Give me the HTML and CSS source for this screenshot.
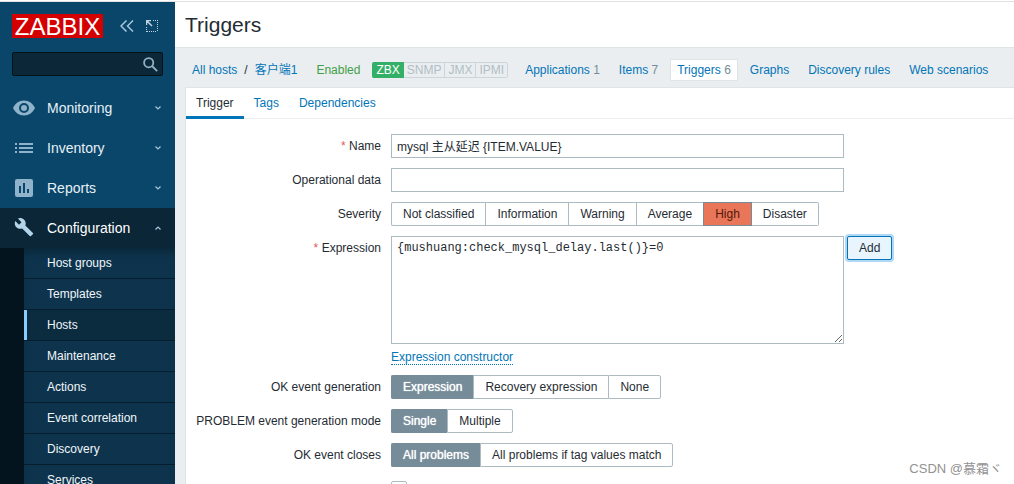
FILE: index.html
```html
<!DOCTYPE html>
<html lang="en">
<head>
<meta charset="utf-8">
<title>Triggers</title>
<link rel="stylesheet" href="styles.css">
</head>
<body>
<aside class="sidebar">
  <div class="brand">
    <a class="logo" href="#">ZABBIX</a>
    <button class="icon-button" type="button" aria-label="Collapse sidebar">
      <svg width="14" height="12" viewBox="0 0 14 12" fill="none" stroke="#a9c6da" stroke-width="1.5"><path d="M6.500 .5 1 6l5.500 5.500M13 .5 7.500 6l5.500 5.500"/></svg>
    </button>
    <button class="icon-button" type="button" aria-label="Hide sidebar">
      <svg width="12" height="12" viewBox="0 0 12 12" fill="none" stroke="#c0d5e3"><path d="M7 .5h5M11.500 2v10M.5 7v5M1 11.500h10" stroke-dasharray="1 1"/><path d="M0 .5h5M.5 0v5M1 1l5 5" stroke-width="1.500"/></svg>
    </button>
  </div>
  <form class="search">
    <input class="search-input" type="text" aria-label="Search">
    <button class="search-button" type="button" aria-label="Search">
      <svg width="15" height="15" viewBox="0 0 15 15" fill="none" stroke="#8fb0c5" stroke-width="1.800"><circle cx="5.700" cy="5.700" r="4.600"/><path d="m9 9 5.200 5.200"/></svg>
    </button>
  </form>
  <nav class="menu">
    <a class="menu-item" href="#">
      <svg class="menu-icon" width="22" height="16" viewBox="0 0 22 16"><path fill="#8fb3cb" fill-rule="evenodd" d="M11 .5C6 .5 2 3.500 0 8c2 4.500 6 7.500 11 7.500S20 12.500 22 8C20 3.500 16 .5 11 .5Zm0 2.500a5 5 0 1 1 0 10 5 5 0 0 1 0-10Zm0 2a3 3 0 1 0 0 6 3 3 0 0 0 0-6Z"/></svg>
      <span class="menu-text">Monitoring</span>
      <svg class="chevron" width="6" height="4" viewBox="0 0 6 4"><path d="m.5.5 2.500 2.500L5.500.5"/></svg>
    </a>
    <a class="menu-item" href="#">
      <svg class="menu-icon" width="18" height="12" viewBox="0 0 18 12" fill="#8fb3cb"><path d="M0 1h2v2H0zM4 1h14v2H4zM0 5h2v2H0zM4 5h14v2H4zM0 9h2v2H0zM4 9h14v2H4z"/></svg>
      <span class="menu-text">Inventory</span>
      <svg class="chevron" width="6" height="4" viewBox="0 0 6 4"><path d="m.5.5 2.500 2.500L5.500.5"/></svg>
    </a>
    <a class="menu-item" href="#">
      <svg class="menu-icon" width="18" height="18" viewBox="0 0 18 18"><path fill="#8fb3cb" fill-rule="evenodd" d="M2 0h14a2 2 0 0 1 2 2v14a2 2 0 0 1-2 2H2a2 2 0 0 1-2-2V2a2 2 0 0 1 2-2ZM4 7v7h2V7ZM8 4v10h2V4ZM12 10v4h2v-4Z"/></svg>
      <span class="menu-text">Reports</span>
      <svg class="chevron" width="6" height="4" viewBox="0 0 6 4"><path d="m.5.5 2.500 2.500L5.500.5"/></svg>
    </a>
    <a class="menu-item menu-item-open" href="#">
      <svg class="menu-icon" width="20" height="20" viewBox="0 1 24 24"><path fill="#b4d4e9" d="m22.700 19-9.100-9.100c.9-2.300.4-5-1.500-6.900-2-2-5-2.400-7.400-1.300L9 6 6 9 1.600 4.700C.4 7.100.9 10.100 2.900 12.100c1.900 1.900 4.600 2.400 6.900 1.500l9.100 9.100c.4.400 1 .4 1.400 0l2.300-2.300c.5-.4.500-1.100.1-1.400z"/></svg>
      <span class="menu-text">Configuration</span>
      <svg class="chevron" width="6" height="4" viewBox="0 0 6 4"><path d="m.5 3.500 2.500-2.500 2.500 2.500"/></svg>
    </a>
    <div class="submenu">
      <a class="submenu-item" href="#">Host groups</a>
      <a class="submenu-item" href="#">Templates</a>
      <a class="submenu-item submenu-item-current" href="#">Hosts</a>
      <a class="submenu-item" href="#">Maintenance</a>
      <a class="submenu-item" href="#">Actions</a>
      <a class="submenu-item" href="#">Event correlation</a>
      <a class="submenu-item" href="#">Discovery</a>
      <a class="submenu-item" href="#">Services</a>
    </div>
  </nav>
</aside>
<main class="main">
  <header class="title-bar"><h1 class="title">Triggers</h1></header>
  <nav class="host-nav">
    <div class="crumbs"><a href="#">All hosts</a><span>/</span><a href="#">客户端1</a></div>
    <span class="enabled">Enabled</span>
    <div class="badges"><span class="badge badge-on">ZBX</span><span class="badge">SNMP</span><span class="badge">JMX</span><span class="badge">IPMI</span></div>
    <div class="host-links">
      <span class="host-link"><a href="#">Applications</a> 1</span>
      <span class="host-link"><a href="#">Items</a> 7</span>
      <span class="host-link host-link-current"><a href="#">Triggers</a> 6</span>
      <span class="host-link"><a href="#">Graphs</a></span>
      <span class="host-link"><a href="#">Discovery rules</a></span>
      <span class="host-link"><a href="#">Web scenarios</a></span>
    </div>
  </nav>
  <section class="panel">
    <nav class="tabs">
      <a class="tab tab-current" href="#">Trigger</a>
      <a class="tab" href="#">Tags</a>
      <a class="tab" href="#">Dependencies</a>
    </nav>
    <form class="form">
      <label class="label required" for="name">Name</label>
      <input class="text-field" id="name" type="text" value="mysql 主从延迟 {ITEM.VALUE}">

      <label class="label" for="opdata">Operational data</label>
      <input class="text-field" id="opdata" type="text">

      <span class="label" id="severity-label">Severity</span>
      <div class="segments" role="radiogroup" aria-labelledby="severity-label">
        <label class="segment"><input type="radio" name="severity">Not classified</label>
        <label class="segment"><input type="radio" name="severity">Information</label>
        <label class="segment"><input type="radio" name="severity">Warning</label>
        <label class="segment"><input type="radio" name="severity">Average</label>
        <label class="segment segment-high"><input type="radio" name="severity" checked>High</label>
        <label class="segment"><input type="radio" name="severity">Disaster</label>
      </div>

      <label class="label required" for="expression">Expression</label>
      <div class="expression">
        <div class="expression-row">
          <textarea class="expression-field" id="expression" spellcheck="false">{mushuang:check_mysql_delay.last()}=0</textarea>
          <button class="add-button" type="button">Add</button>
        </div>
        <a class="constructor" href="#">Expression constructor</a>
      </div>

      <span class="label" id="ok-label">OK event generation</span>
      <div class="segments" role="radiogroup" aria-labelledby="ok-label">
        <label class="segment"><input type="radio" name="ok" checked>Expression</label>
        <label class="segment"><input type="radio" name="ok">Recovery expression</label>
        <label class="segment"><input type="radio" name="ok">None</label>
      </div>

      <span class="label" id="mode-label">PROBLEM event generation mode</span>
      <div class="segments" role="radiogroup" aria-labelledby="mode-label">
        <label class="segment"><input type="radio" name="mode" checked>Single</label>
        <label class="segment"><input type="radio" name="mode">Multiple</label>
      </div>

      <span class="label" id="closes-label">OK event closes</span>
      <div class="segments" role="radiogroup" aria-labelledby="closes-label">
        <label class="segment"><input type="radio" name="closes" checked>All problems</label>
        <label class="segment"><input type="radio" name="closes">All problems if tag values match</label>
      </div>

      <input class="checkbox" type="checkbox" aria-label="Allow manual close">
    </form>
  </section>
</main>
<div class="watermark">CSDN @慕霜ヾ</div>
</body>
</html>
```
FILE: styles.css
```css
* { box-sizing: border-box; }

body {
  margin: 0;
  height: 100vh;
  overflow: hidden;
  display: flex;
  padding-top: 2px;
  background: linear-gradient(#fff 1px, #dfe1e3 1px, #dfe1e3 2px, #ebeef0 2px);
  color: #1f2c33;
  font: 12px/14px "Liberation Sans", Arial, "Noto Sans CJK SC", sans-serif;
}

a { color: #0275b8; text-decoration: none; }
button, input, textarea { font: inherit; color: inherit; }

/* Sidebar */
.sidebar {
  flex: 0 0 175px;
  overflow: hidden;
  background: #0a466a;
}

.brand {
  display: flex;
  align-items: center;
  gap: 12px;
  padding: 12px 12px 14px;
}

.logo {
  width: 91px;
  height: 24px;
  margin-right: 5px;
  background: #d40000;
  color: #fff;
  font-size: 24px;
  line-height: 25px;
  text-align: center;
}

.icon-button {
  display: flex;
  padding: 0;
  border: 0;
  background: none;
}

.search {
  display: flex;
  align-items: center;
  height: 24px;
  margin: 0 12px 12px;
  padding: 0 4px;
  border: 1px solid #051017;
  border-radius: 2px;
  background: #0c2738;
}

.search-input {
  flex: 1;
  min-width: 0;
  border: 0;
  outline: 0;
  background: none;
  color: #fff;
}

.search-button {
  display: flex;
  padding: 0;
  border: 0;
  background: none;
}

.menu-item {
  display: flex;
  align-items: center;
  height: 40px;
  padding-right: 14px;
  color: #e6f0f6;
  font-size: 14px;
  line-height: 16px;
}

.menu-item-open { background: #0a2637; color: #fff; }
.menu-icon { flex: none; margin: 0 auto; }
.menu-text { width: 108px; }

.chevron {
  flex: none;
  fill: none;
  stroke: #a9c6da;
  stroke-width: 1.2px;
}

.submenu {
  border-left: 24px solid #04141e;
  background: #0e344d;
  box-shadow: inset 0 8px 8px -4px #0a2637;
}

.submenu-item {
  display: block;
  height: 31px;
  padding: 8px 0 8px 23px;
  border-bottom: 1px solid #051d2c;
  color: #f0f6fa;
}

.submenu-item-current {
  padding-left: 20px;
  background: linear-gradient(90deg, #88ccff 3px, #0b2b3f 3px);
  padding-left: 23px;
}

/* Heading and host navigation */
.main {
  flex: 1;
  min-width: 0;
  display: flex;
  flex-direction: column;
}

.title-bar {
  padding: 11px 10px 10px;
  border-bottom: 1px solid #dfe4e7;
  background: #fff;
}

.title {
  margin: 0;
  font-size: 21px;
  font-weight: 400;
  line-height: 24px;
}

.host-nav {
  display: flex;
  align-items: center;
  height: 39px;
  padding: 5px 17px 0;
  white-space: nowrap;
}

.crumbs { display: flex; gap: 7px; }
.enabled { margin-left: 19px; color: #429e47; }

.badges { display: flex; margin-left: 12px; }

.badge {
  height: 16px;
  padding: 0 3px;
  border: 1px solid #ccd5d9;
  border-left-width: 0;
  color: #afbec6;
}

.badge:last-child { border-radius: 0 2px 2px 0; }

.badge-on {
  padding: 0 3px 0 4px;
  border-color: #34af67;
  border-radius: 2px 0 0 2px;
  background: #34af67;
  color: #fff;
}

.host-links { display: flex; gap: 1px; margin-left: 8px; }

.host-link {
  padding: 3px 9px;
  color: #768d99;
}

.host-link-current {
  margin: 0 3px;
  padding: 3px 6px;
  background: #fff;
  box-shadow: 0 0 0 1px #dfe4e7;
}

/* Form panel */
.panel {
  flex: 1;
  min-height: 0;
  margin-left: 10px;
  overflow: hidden;
  border: 1px solid #dfe4e7;
  border-width: 1px 0 0 1px;
  background: #fff;
}

.tabs {
  display: flex;
  height: 31px;
  border-bottom: 1px solid #ebeef0;
}

.tab { height: 31px; padding: 8px 10px; }

.tab-current {
  border-bottom: 3px solid #0275b8;
  color: #1f2c33;
}

.form {
  display: grid;
  grid-template-columns: 195px minmax(0, 1fr);
  gap: 10px;
  align-items: start;
  padding: 15px 10px 15px 0;
}

.label { padding: 5px 0; text-align: right; }
.required::before { content: "* "; color: #e45959; }

.text-field {
  width: 100%;
  max-width: 453px;
  height: 24px;
  padding: 0 5px 2px;
  border: 1px solid #acbbc2;
  outline: 0;
}

.segments { display: flex; height: 24px; white-space: nowrap; }

.segment {
  padding: 4px 11px;
  border: 1px solid #acbbc2;
  border-right-width: 0;
}

.segment:first-child { border-radius: 2px 0 0 2px; }
.segment:last-child { border-right-width: 1px; border-radius: 0 2px 2px 0; }

.segment input {
  position: absolute;
  opacity: 0;
  pointer-events: none;
}

.segment:has(:checked) {
  border-color: #768d99;
  background: #768d99;
  color: #fff;
  text-shadow: 0 0 1px #fff;
}

.segment-high:has(:checked) {
  border-right-width: 1px;
  background: #e97659;
  color: #52190b;
  text-shadow: none;
}

.segment-high + .segment { border-left-width: 0; }

.expression-row { display: flex; align-items: flex-start; gap: 3px; }

.expression-field {
  flex: 0 1 453px;
  min-width: 0;
  height: 108px;
  padding: 4px 5px;
  border: 1px solid #acbbc2;
  outline: 0;
  font-family: "Liberation Mono", "Courier New", monospace;
}

.add-button {
  height: 24px;
  padding: 0 11px;
  border: 1px solid #0275b8;
  border-radius: 2px;
  background: #e8f5ff;
  box-shadow: 0 0 0 2px #b0d8f4;
}

.constructor {
  display: block;
  width: fit-content;
  margin-top: 6px;
  border-bottom: 1px dotted #0275b8;
}

.checkbox {
  grid-column: 2;
  appearance: none;
  width: 16px;
  height: 16px;
  margin: 4px 0;
  border: 1px solid #acbbc2;
  border-radius: 2px;
}

.watermark {
  position: absolute;
  right: 12px;
  bottom: 8px;
  color: #929292;
  font-size: 13px;
}
```
